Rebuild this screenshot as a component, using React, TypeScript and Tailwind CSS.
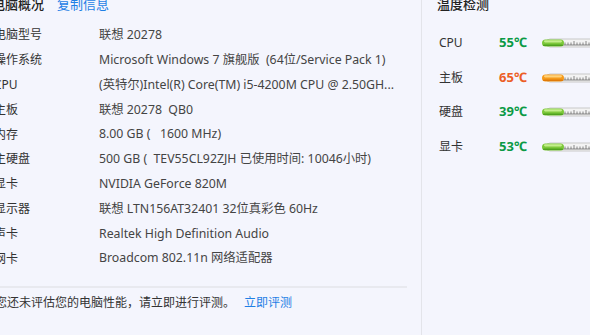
import React from 'react'

type InfoRow = { label: string; value: string }

const rows: InfoRow[] = [
  { label: '电脑型号', value: '联想 20278' },
  { label: '操作系统', value: 'Microsoft Windows 7 旗舰版  (64位/Service Pack 1)' },
  { label: 'CPU', value: '(英特尔)Intel(R) Core(TM) i5-4200M CPU @ 2.50GH...' },
  { label: '主板', value: '联想 20278  QB0' },
  { label: '内存', value: '8.00 GB (   1600 MHz)' },
  { label: '主硬盘', value: '500 GB (  TEV55CL92ZJH 已使用时间: 10046小时)' },
  { label: '显卡', value: 'NVIDIA GeForce 820M' },
  { label: '显示器', value: '联想 LTN156AT32401 32位真彩色 60Hz' },
  { label: '声卡', value: 'Realtek High Definition Audio' },
  { label: '网卡', value: 'Broadcom 802.11n 网络适配器' },
]

type Temp = { label: string; value: number; hot: boolean }

const temps: Temp[] = [
  { label: 'CPU', value: 55, hot: false },
  { label: '主板', value: 65, hot: true },
  { label: '硬盘', value: 39, hot: false },
  { label: '显卡', value: 53, hot: false },
]

// small thermometer bar, clipped by the window edge
function Thermo({ hot }: { hot: boolean }) {
  const fill = hot ? '#f59a1b' : '#7cc83a'
  const dark = hot ? '#e07a08' : '#4fa21e'
  const light = hot ? '#ffd27a' : '#c4ee8c'
  const ticks = []
  for (let i = 0; i < 14; i++) {
    ticks.push(
      <line key={i} x1={20 + i * 3} x2={20 + i * 3} y1={i % 4 === 0 ? 4 : 5.5} y2={8} stroke="#6b6b6b" strokeWidth="0.8" />,
    )
  }
  return (
    <svg width="60" height="12" viewBox="0 0 60 12" className="block">
      <rect x="4" y="2" width="60" height="8" rx="4" fill="#f3f3f3" stroke="#c9c9c9" strokeWidth="1" />
      <line x1="18" x2="64" y1="8" y2="8" stroke="#6b6b6b" strokeWidth="0.8" />
      {ticks}
      <rect x="0" y="2.5" width="22" height="7" rx="3.5" fill={fill} />
      <rect x="2" y="3.2" width="18" height="2.2" rx="1.1" fill={light} />
      <rect x="1" y="7.6" width="20" height="1.3" rx="0.65" fill={dark} />
    </svg>
  )
}

export default function App() {
  return (
    <div
      className="flex h-[335px] w-[590px] overflow-hidden bg-[#f4f5fd] text-[12px] text-[#333]"
      style={{ fontFamily: '"Noto Sans", "Noto Sans CJK SC", sans-serif' }}
    >
      <div className="flex w-[421px] shrink-0 flex-col">
        <div className="-mt-[6px] flex items-center leading-[20px]">
          <span className="-ml-[8px] text-[13px] font-medium text-[#222]">电脑概况</span>
          <span className="ml-[13px] text-[13px] text-[#1f7fe5]">复制信息</span>
        </div>
        <div className="mt-[9px] flex flex-col">
          {rows.map((r) => (
            <div key={r.label} className="flex h-[24.8px] items-center whitespace-pre">
              <span className="-ml-[6px] w-[105px] shrink-0">{r.label}</span>
              <span className="text-[12.3px] text-[#444]">{r.value}</span>
            </div>
          ))}
        </div>
        <div className="mt-[15px] mr-[14px] h-[2px] bg-[#e8e9ef]" />
        <div className="mt-[5px] flex items-center whitespace-nowrap leading-[20px]">
          <span className="-ml-[5px]">您还未评估您的电脑性能，请立即进行评测。</span>
          <span className="ml-[9px] text-[#1f7fe5]">立即评测</span>
        </div>
      </div>
      <div className="flex flex-1 flex-col border-l border-[#e3e4ea] pl-[15px]">
        <div className="-mt-[6px] text-[13px] font-medium leading-[20px] text-[#222]">温度检测</div>
        <div className="mt-[19px] flex flex-col gap-[14.6px]">
          {temps.map((t) => (
            <div key={t.label} className="flex h-[20px] items-center whitespace-nowrap">
              <span className="w-[62px] shrink-0 pl-[2px] text-[#333]">{t.label}</span>
              <span className={`w-[43px] shrink-0 text-[13px] font-bold ${t.hot ? 'text-[#ec5d26]' : 'text-[#0b9a45]'}`}>
                {t.value}℃
              </span>
              <Thermo hot={t.hot} />
            </div>
          ))}
        </div>
      </div>
    </div>
  )
}
